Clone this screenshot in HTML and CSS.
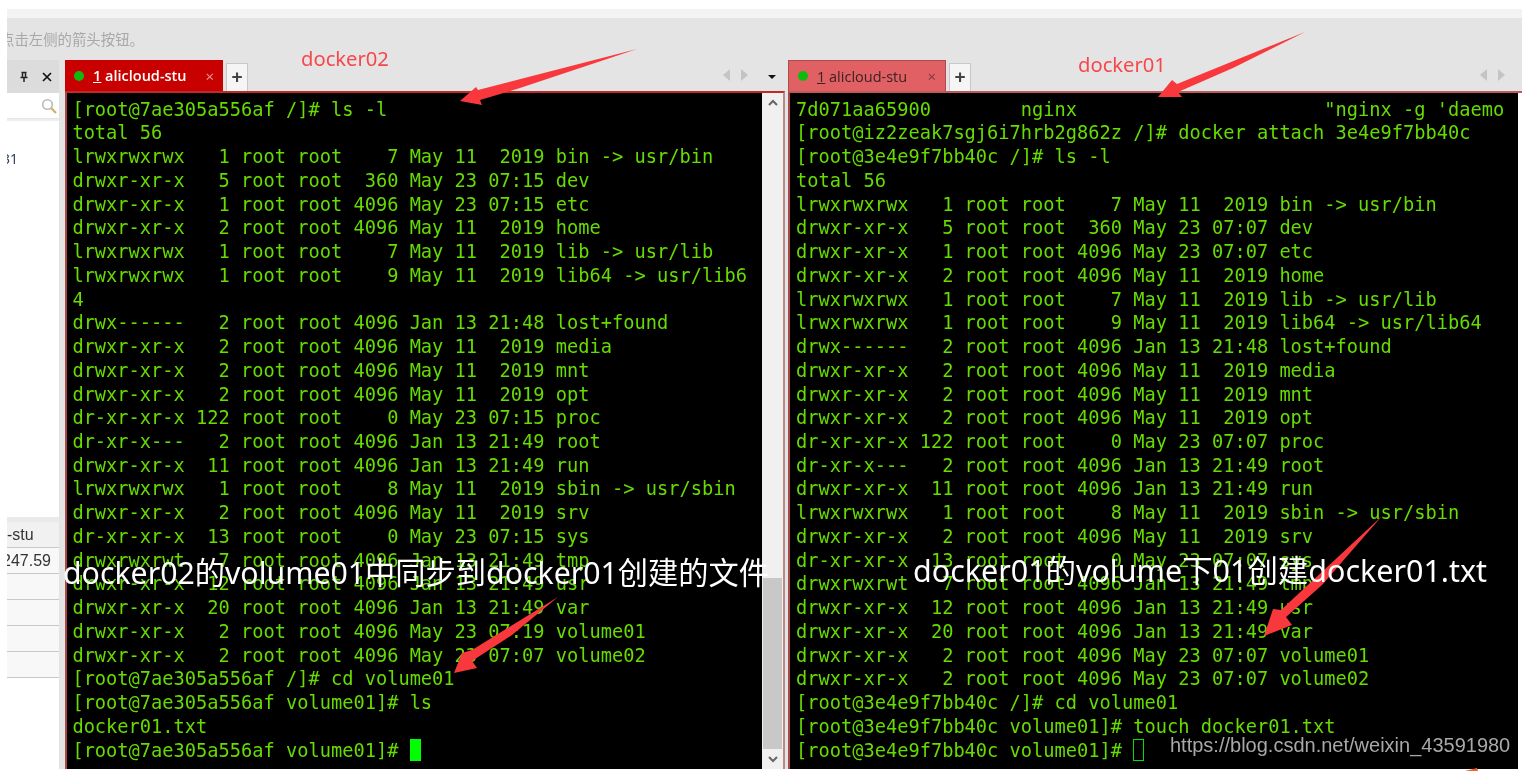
FILE: index.html
```html
<!DOCTYPE html>
<html lang="zh-CN">
<head>
<meta charset="utf-8">
<title>docker volume</title>
<link rel="stylesheet" href="styles.css">
</head>
<body>
<div class="page">
  <div class="sliver"><div class="sliver-clip"><span class="sliver-text">设置选项</span></div></div>
  <div class="band"></div>
  <div class="notice"><span class="notice-text">点击左侧的箭头按钮。</span></div>
  <div class="workspace">
    <aside class="sidebar">
      <div class="side-head">
        <svg class="side-icon" viewBox="0 0 12 12"><path d="M3.5 1.5h5M4.5 1.5v5M7.5 1.5v5M2.5 6.5h7M6 6.5v4.5" fill="none" stroke="#222" stroke-width="1.5"/></svg>
        <svg class="side-icon" viewBox="0 0 12 12"><path d="M2 2l8 8M10 2l-8 8" fill="none" stroke="#111" stroke-width="1.7"/></svg>
      </div>
      <div class="side-search">
        <svg class="search-icon" viewBox="0 0 16 16"><circle cx="6.5" cy="6.5" r="4.8" fill="#fff" stroke="#bbb" stroke-width="1.6"/><path d="M10 10l5 5" stroke="#d8b070" stroke-width="2.4"/></svg>
      </div>
      <div class="side-list">
        <div class="side-num">31</div>
        <div class="side-rows">
          <div class="side-row side-row-first">-stu</div>
          <div class="side-row side-row-ip">247.59</div>
          <div class="side-row"></div>
          <div class="side-row"></div>
          <div class="side-row"></div>
          <div class="side-row"></div>
        </div>
      </div>
    </aside>

    <section class="pane pane-left">
      <div class="tabbar">
        <div class="tab tab-active">
          <span class="dot"></span><span class="tab-label"><u>1</u> alicloud-stu</span><span class="tab-x">×</span>
        </div>
        <div class="tab-add">+</div>
        <div class="tab-nav">
          <span class="tri tri-l"></span><span class="tri tri-r"></span>
        </div>
        <span class="tab-menu"></span>
      </div>
      <div class="term-wrap">
        <pre class="term">[root@7ae305a556af /]# ls -l
total 56
lrwxrwxrwx   1 root root    7 May 11  2019 bin -> usr/bin
drwxr-xr-x   5 root root  360 May 23 07:15 dev
drwxr-xr-x   1 root root 4096 May 23 07:15 etc
drwxr-xr-x   2 root root 4096 May 11  2019 home
lrwxrwxrwx   1 root root    7 May 11  2019 lib -> usr/lib
lrwxrwxrwx   1 root root    9 May 11  2019 lib64 -> usr/lib6
4
drwx------   2 root root 4096 Jan 13 21:48 lost+found
drwxr-xr-x   2 root root 4096 May 11  2019 media
drwxr-xr-x   2 root root 4096 May 11  2019 mnt
drwxr-xr-x   2 root root 4096 May 11  2019 opt
dr-xr-xr-x 122 root root    0 May 23 07:15 proc
dr-xr-x---   2 root root 4096 Jan 13 21:49 root
drwxr-xr-x  11 root root 4096 Jan 13 21:49 run
lrwxrwxrwx   1 root root    8 May 11  2019 sbin -> usr/sbin
drwxr-xr-x   2 root root 4096 May 11  2019 srv
dr-xr-xr-x  13 root root    0 May 23 07:15 sys
drwxrwxrwt   7 root root 4096 Jan 13 21:49 tmp
drwxr-xr-x  12 root root 4096 Jan 13 21:49 usr
drwxr-xr-x  20 root root 4096 Jan 13 21:49 var
drwxr-xr-x   2 root root 4096 May 23 07:19 volume01
drwxr-xr-x   2 root root 4096 May 23 07:07 volume02
[root@7ae305a556af /]# cd volume01
[root@7ae305a556af volume01]# ls
docker01.txt
[root@7ae305a556af volume01]# <span class="cursor"></span></pre>
        <div class="scrollbar">
          <svg class="scroll-arrow" viewBox="0 0 12 8"><path d="M2 6l4-4 4 4" fill="none" stroke="#666" stroke-width="2"/></svg>
          <div class="scroll-track"><div class="scroll-thumb"></div></div>
          <svg class="scroll-arrow" viewBox="0 0 12 8"><path d="M2 2l4 4 4-4" fill="none" stroke="#666" stroke-width="2"/></svg>
        </div>
      </div>
    </section>

    <section class="pane pane-right">
      <div class="tabbar">
        <div class="tab tab-idle">
          <span class="dot"></span><span class="tab-label"><u>1</u> alicloud-stu</span><span class="tab-x">×</span>
        </div>
        <div class="tab-add">+</div>
        <div class="tab-nav">
          <span class="tri tri-l"></span><span class="tri tri-r"></span>
        </div>
      </div>
      <div class="term-wrap">
        <pre class="term">7d071aa65900        nginx                      "nginx -g 'daemo
[root@iz2zeak7sgj6i7hrb2g862z /]# docker attach 3e4e9f7bb40c
[root@3e4e9f7bb40c /]# ls -l
total 56
lrwxrwxrwx   1 root root    7 May 11  2019 bin -> usr/bin
drwxr-xr-x   5 root root  360 May 23 07:07 dev
drwxr-xr-x   1 root root 4096 May 23 07:07 etc
drwxr-xr-x   2 root root 4096 May 11  2019 home
lrwxrwxrwx   1 root root    7 May 11  2019 lib -> usr/lib
lrwxrwxrwx   1 root root    9 May 11  2019 lib64 -> usr/lib64
drwx------   2 root root 4096 Jan 13 21:48 lost+found
drwxr-xr-x   2 root root 4096 May 11  2019 media
drwxr-xr-x   2 root root 4096 May 11  2019 mnt
drwxr-xr-x   2 root root 4096 May 11  2019 opt
dr-xr-xr-x 122 root root    0 May 23 07:07 proc
dr-xr-x---   2 root root 4096 Jan 13 21:49 root
drwxr-xr-x  11 root root 4096 Jan 13 21:49 run
lrwxrwxrwx   1 root root    8 May 11  2019 sbin -> usr/sbin
drwxr-xr-x   2 root root 4096 May 11  2019 srv
dr-xr-xr-x  13 root root    0 May 23 07:07 sys
drwxrwxrwt   7 root root 4096 Jan 13 21:49 tmp
drwxr-xr-x  12 root root 4096 Jan 13 21:49 usr
drwxr-xr-x  20 root root 4096 Jan 13 21:49 var
drwxr-xr-x   2 root root 4096 May 23 07:07 volume01
drwxr-xr-x   2 root root 4096 May 23 07:07 volume02
[root@3e4e9f7bb40c /]# cd volume01
[root@3e4e9f7bb40c volume01]# touch docker01.txt
[root@3e4e9f7bb40c volume01]# <span class="cursor cursor-idle"></span></pre>
      </div>
    </section>
  </div>

  <svg class="arrows" viewBox="0 0 1522 776">
    <polygon points="637,49 478,90 476,87 460,101 482,105 480,100 520,88"/>
    <polygon points="1305,32 1177,84 1172,80 1158,97 1182,97 1178,92 1233,68"/>
    <polygon points="558,597 472,650 462,653 454,673 477,668 472,661 512,635"/>
    <polygon points="1382,516 1281,610 1273,609 1264,636 1292,625 1286,617 1322,585"/>
    <polygon class="arrow-orange" points="1465,771 1477,768 1478,771"/>
  </svg>
  <span class="label label-02">docker02</span>
  <span class="label label-01">docker01</span>
  <span class="caption caption-02">docker02的volume01中同步到docker01创建的文件</span>
  <span class="caption caption-01">docker01的volume下01创建docker01.txt</span>
  <span class="watermark">https://blog.csdn.net/weixin_43591980</span>
</div>
</body>
</html>
```
FILE: styles.css
```css
* { box-sizing: border-box; }
html, body { margin: 0; padding: 0; background: #fff; }
.page {
  position: relative;
  width: 1522px;
  height: 776px;
  overflow: hidden;
  background: #fff;
  padding-left: 7px;
  font-family: "Noto Sans", "Noto Sans CJK SC", sans-serif;
  filter: blur(0.35px);
}
.sliver { height: 9px; padding-top: 6px; }
.sliver-clip { height: 3px; overflow: hidden; }
.sliver-text {
  display: block;
  margin-top: -15px;
  font-size: 9.5px;
  line-height: 20px;
  color: #c4c4c4;
}
.band { height: 9px; background: #f3f3f3; }
.notice {
  height: 42px;
  background: #e4e4e4;
  padding-top: 11px;
  overflow: hidden;
}
.notice-text {
  display: block;
  margin-left: -7px;
  font-size: 14.4px;
  line-height: 20px;
  color: #a8a8a8;
  font-family: "Noto Sans CJK SC", sans-serif;
}
.workspace {
  display: flex;
  height: 709px;
  background: #e4e4e4;
}

/* left dock */
.sidebar {
  width: 52px;
  flex: none;
  margin-right: 6px;
  display: flex;
  flex-direction: column;
  background: #fff;
}
.side-head {
  height: 33px;
  background: #dcdcdc;
  display: flex;
  align-items: center;
  justify-content: flex-end;
  gap: 11px;
  padding-right: 6px;
}
.side-icon { width: 12px; height: 12px; }
.side-search {
  height: 26px;
  background: #fff;
  border-bottom: 1px solid #e6e6e6;
  display: flex;
  align-items: center;
  justify-content: flex-end;
  padding-right: 2px;
}
.search-icon { width: 16px; height: 16px; }
.side-list {
  flex: 1;
  display: flex;
  flex-direction: column;
  justify-content: space-between;
  border-top: 2px solid #eee;
  background: #fff;
}
.side-num {
  margin-top: 29px;
  font-size: 14px;
  line-height: 18px;
  color: #33415a;
  overflow: hidden;
  text-indent: -5px;
}
.side-rows { margin-bottom: 91px; }
.side-row {
  height: 26px;
  border-bottom: 1px solid #c8c8c8;
  background: #f8f8f8;
  font-family: "Liberation Sans", sans-serif;
  font-size: 16px;
  line-height: 25px;
  color: #333;
  white-space: nowrap;
  overflow: hidden;
}
.side-row-first { height: 31px; padding-top: 5px; background: linear-gradient(#eaeaea 5px, #f1f1f1 5px); }
.side-row-ip { text-indent: -5px; }

/* terminal panes */
.pane {
  display: flex;
  flex-direction: column;
  flex: none;
}
.pane-left { width: 720px; margin-right: 3px; }
.pane-right { width: 734px; }
.tabbar {
  height: 31px;
  display: flex;
  align-items: flex-end;
  position: relative;
}
.tab {
  width: 158px;
  height: 31px;
  display: flex;
  align-items: center;
  padding: 0 9px;
  font-family: "Open Sans", "Noto Sans", sans-serif;
  font-size: 14.5px;
  font-weight: 600;
}
.tab-active { background: #c80000; color: #fff; }
.tab-idle { background: #e06064; color: #3a2225; border: 1px solid #ad4c50; border-bottom: 0; font-weight: 400; }
.dot { width: 10px; height: 10px; border-radius: 50%; background: #0dbb0d; flex: none; margin-right: 9px; }
.tab-label { flex: 1; white-space: nowrap; }
.tab-x { font-size: 15px; font-weight: 400; opacity: .6; }
.tab-add {
  width: 22px;
  height: 28px;
  margin-left: 3px;
  background: #f5f5f5;
  border: 1px solid #c8c8c8;
  border-bottom: 0;
  text-align: center;
  font: 700 19px/25px "Liberation Sans", sans-serif;
  color: #444;
}
.tab-nav {
  display: flex;
  gap: 11px;
  margin-left: auto;
  margin-right: 37px;
  align-self: center;
  margin-top: -2px;
}
.pane-right .tab-nav { margin-right: 17px; }
.tri { width: 0; height: 0; border-top: 6px solid transparent; border-bottom: 6px solid transparent; }
.tri-l { border-right: 7px solid #c4c4c4; }
.tri-r { border-left: 7px solid #c4c4c4; }
.tab-menu {
  position: absolute;
  right: 9px;
  top: 15px;
  width: 0;
  height: 0;
  border-left: 4px solid transparent;
  border-right: 4px solid transparent;
  border-top: 4px solid #111;
}
.term-wrap {
  display: flex;
  height: 678px;
  background: #000;
  border-top: 2px solid #bf2a2a;
  border-left: 2px solid #a84848;
}
.pane-left .term-wrap { border-right: 2px solid #b98a8a; }
.pane-right .term-wrap {
  border-top-color: #c05a5a;
  background: linear-gradient(90deg, #000 99.5%, #fff 99.5%);
}
.term {
  flex: 1;
  min-width: 0;
  margin: 0;
  padding: 4.7px 0 0 6px;
  overflow: hidden;
  font-family: "DejaVu Sans Mono", monospace;
  font-size: 18.68px;
  line-height: 23.74px;
  color: #66dc00;
}
.pane-left .term { padding-left: 5.4px; }
.pane-right .term { margin-right: 3px; }
.cursor {
  display: inline-block;
  width: 11px;
  height: 22px;
  vertical-align: -4px;
  background: #00ff00;
}
.cursor-idle { background: transparent; border: 1px solid #00e000; }
.scrollbar {
  width: 21px;
  flex: none;
  background: #f0f0f0;
  display: flex;
  flex-direction: column;
  align-items: center;
}
.scroll-arrow { width: 12px; height: 8px; flex: none; margin: 6px 0; }
.scroll-track { flex: 1; width: 100%; display: flex; flex-direction: column; justify-content: flex-end; }
.scroll-thumb { height: 171px; margin: 0 1px; background: #c8c8c8; }

/* annotations drawn over the screenshot */
.arrows { position: absolute; left: 0; top: 0; width: 1522px; height: 776px; pointer-events: none; }
.arrows polygon { fill: #f8383c; }
.arrows .arrow-orange { fill: #f0602a; }
.label {
  position: absolute;
  font-size: 20.2px;
  line-height: 26px;
  color: #f8474b;
}
.label-02 { left: 301px; top: 45px; }
.label-01 { left: 1078px; top: 51px; }
.caption {
  position: absolute;
  font-family: "Noto Sans", "Noto Sans CJK SC", sans-serif;
  line-height: 40px;
  color: #fff;
  white-space: nowrap;
}
.caption-02 { left: 63px; top: 553px; font-size: 30.25px; }
.caption-01 { left: 913px; top: 550px; font-size: 30.45px; }
.watermark {
  position: absolute;
  left: 1170px;
  top: 733px;
  font-family: "Liberation Sans", sans-serif;
  font-size: 20px;
  line-height: 24px;
  color: #a8a8a8;
  white-space: nowrap;
}
```
